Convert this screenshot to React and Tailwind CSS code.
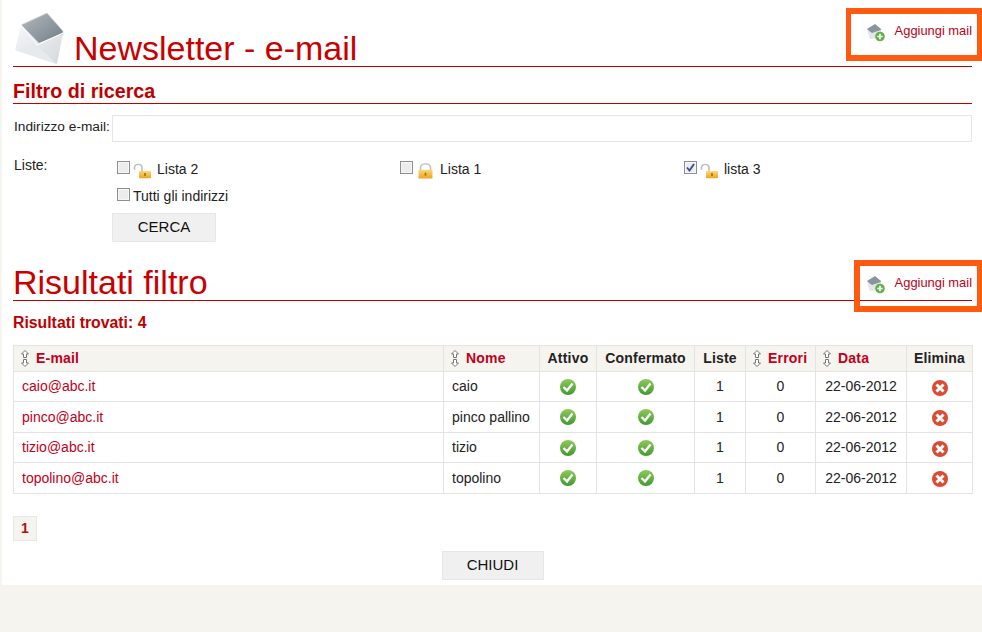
import React from "react";

const font = { fontFamily: '"Liberation Sans", Arial, sans-serif' };

function Envelope() {
  return (
    <svg width="54" height="54" viewBox="0 0 54 54" className="shrink-0">
      <defs>
        <linearGradient id="envIn" x1="0" y1="0" x2="1" y2="1">
          <stop offset="0" stopColor="#b4babe" />
          <stop offset="1" stopColor="#6f7d86" />
        </linearGradient>
        <linearGradient id="envB" x1="0" y1="0" x2="1" y2="1">
          <stop offset="0" stopColor="#f6f8f9" />
          <stop offset="1" stopColor="#d3d8db" />
        </linearGradient>
      </defs>
      <path d="M8 13 L34 1 L50 19 L50 23 L26 32 Z" fill="url(#envIn)" stroke="#d5d9db" strokeWidth="0.8" />
      <path d="M2 38 L8 13 L26 31 L50 21 L44 52 Z" fill="url(#envB)" />
      <path d="M2 38 L24 33 L44 52 Z" fill="#e6eaec" />
      <path d="M8 13 L24 33 M50 21 L24 33" stroke="#ffffff" strokeWidth="1" fill="none" />
    </svg>
  );
}

function AddMail() {
  return (
    <svg width="20" height="20" viewBox="0 0 20 20" className="shrink-0">
      <path d="M1 7 L9 2 L15 7 L14 11 L6 12 Z" fill="#8a959b" />
      <path d="M1 8 L6 11 L15 8 L14 16 L4 17 Z" fill="#e3e6e8" />
      <circle cx="14" cy="14.5" r="4.8" fill="#62ae4a" />
      <path d="M14 11.8 V17.2 M11.3 14.5 H16.7" stroke="#fff" strokeWidth="1.7" />
    </svg>
  );
}

function AddLink() {
  return (
    <a className="flex items-center gap-[9px] text-[12.9px] text-[#c00020]">
      <AddMail />
      <span className="relative top-[-1px]">Aggiungi mail</span>
    </a>
  );
}

function Lock({ open }) {
  return (
    <svg width="19" height="17" viewBox="0 0 19 20" preserveAspectRatio="none" className="shrink-0 block">
      <defs>
        <linearGradient id="lockG" x1="0" y1="0" x2="0" y2="1">
          <stop offset="0" stopColor="#fbd97a" />
          <stop offset="1" stopColor="#eea321" />
        </linearGradient>
      </defs>
      {open ? (
        <>
          <path d="M1.5 9 V6.5 C1.5 1.5 9 1.5 9 6.5 V11" fill="none" stroke="#b9bfc4" strokeWidth="1.6" />
          <rect x="6" y="10.5" width="12" height="8.5" rx="1" fill="url(#lockG)" />
          <rect x="11.2" y="13" width="1.6" height="3.5" fill="#a86a10" />
        </>
      ) : (
        <>
          <path d="M4.5 10 V6.5 C4.5 0.8 14.5 0.8 14.5 6.5 V10" fill="none" stroke="#b9bfc4" strokeWidth="1.6" />
          <rect x="2.5" y="9" width="14" height="10.5" rx="1" fill="url(#lockG)" />
          <rect x="8.7" y="12.5" width="1.6" height="3.5" fill="#a86a10" />
        </>
      )}
    </svg>
  );
}

function Check({ checked }) {
  return (
    <span className="relative block w-[13px] h-[13px] shrink-0 border border-[#8e8f8f] bg-[#ececec] shadow-[inset_0_0_0_1px_#f6f6f6]">
      {checked && (
        <svg width="11" height="11" viewBox="0 0 11 11" className="absolute left-0 top-0">
          <path d="M2 5.5 L4.5 8.5 L9 2" fill="none" stroke="#3b4a8c" strokeWidth="1.8" />
        </svg>
      )}
    </span>
  );
}

function SortIcon() {
  return (
    <svg width="10" height="17" viewBox="0 0 10 17" className="shrink-0">
      <path d="M5 0.5 L8.5 4 H6.5 V7.5 H3.5 V4 H1.5 Z" fill="#fff" stroke="#777" strokeWidth="1" />
      <path d="M5 16.5 L8.5 13 H6.5 V9.5 H3.5 V13 H1.5 Z" fill="#fff" stroke="#777" strokeWidth="1" />
    </svg>
  );
}

function Ok() {
  return (
    <svg width="16" height="16" viewBox="0 0 16 16" className="block mx-auto">
      <defs>
        <linearGradient id="okG" x1="0" y1="0" x2="0" y2="1">
          <stop offset="0" stopColor="#8fc95a" />
          <stop offset="1" stopColor="#3f9a2e" />
        </linearGradient>
      </defs>
      <circle cx="8" cy="8" r="8" fill="url(#okG)" />
      <path d="M3.5 8 L7 11.5 L12.5 4.5" fill="none" stroke="#fff" strokeWidth="2.4" />
    </svg>
  );
}

function Ko() {
  return (
    <svg width="16" height="16" viewBox="0 0 16 16" className="block mx-auto relative top-[1px]">
      <circle cx="8" cy="8" r="8" fill="#dc4a33" />
      <path d="M4.5 4.5 L11.5 11.5 M11.5 4.5 L4.5 11.5" fill="none" stroke="#fff" strokeWidth="3" />
    </svg>
  );
}

const rows = [
  ["caio@abc.it", "caio", "h-[30px]"],
  ["pinco@abc.it", "pinco pallino", "h-[31px]"],
  ["tizio@abc.it", "tizio", "h-[30px]"],
  ["topolino@abc.it", "topolino", "h-[31px]"],
];

const th = "border border-[#e3e3e3] bg-[#f5f4ef] font-bold text-[14px] tracking-[0.2px] p-0 text-center";
const td = "border border-[#e3e3e3] p-0 text-[14px] text-[#222] text-center";

function SortHead({ children }) {
  return (
    <div className="flex items-center gap-[6px] pl-[6px] text-[#c00020]">
      <SortIcon />
      <span>{children}</span>
    </div>
  );
}

const Btn = ({ children, w }) => (
  <button className={`${w} h-[29px] bg-[#f0f0f0] border border-[#e6e6e6] text-[15px] text-[#111] block`}>{children}</button>
);

function ListItem({ checked, open, label, ml }) {
  return (
    <div className="flex items-start">
      <Check checked={checked} />
      <span className="ml-[3px] mt-[1px]"><Lock open={open} /></span>
      <span className={`${ml} leading-[16px]`}>{label}</span>
    </div>
  );
}

export default function App() {
  return (
    <div style={font} className="min-h-[632px] bg-[#f5f4ef] text-[#222]">
      <div className="relative h-[585px] bg-white ml-[2px] pl-[11px] pr-[10px]">
        {/* header */}
        <div className="relative flex items-end justify-between h-[67px] border-b border-[#c00000] pt-[12px]">
          <div className="flex items-end">
            <Envelope />
            <h1 className="text-[34px] leading-[36px] text-[#c80000] ml-[7px]">Newsletter - e-mail</h1>
          </div>
          <div className="self-start mt-[10px]"><AddLink /></div>
          <div className="absolute right-[-10px] top-[8px] w-[136px] h-[53px] border-x-[5px] border-y-[6px] border-[#ff5a0f]" />
        </div>

        <h2 className="h-[37px] pt-[13px] leading-[22px] text-[19.7px] font-bold text-[#c00000] border-b border-[#c00000]">Filtro di ricerca</h2>

        {/* form */}
        <div className="flex items-center mt-[11px] text-[14px]">
          <label className="w-[99px] shrink-0 pl-[1px] relative top-[-1px] whitespace-nowrap text-[13.7px]">Indirizzo e-mail:</label>
          <div className="h-[27px] grow border border-[#e6e6e6] bg-white" />
        </div>

        <div className="flex mt-[15px] text-[14px]">
          <div className="w-[99px] shrink-0 pl-[1px] leading-[16px]">Liste:</div>
          <div className="grow">
            <div className="grid grid-cols-[283px_284px_1fr] h-[31px] pl-[5px] pt-[4px]">
              <ListItem open label="Lista 2" ml="ml-[5px]" />
              <ListItem label="Lista 1" ml="ml-[5px]" />
              <ListItem checked open label="lista 3" ml="ml-[5px]" />
            </div>
            <div className="flex items-start pl-[5px] h-[25px]">
              <Check /><span className="ml-[3px] leading-[16px]">Tutti gli indirizzi</span>
            </div>
            <Btn w="w-[104px]">CERCA</Btn>
          </div>
        </div>

        {/* results */}
        <div className="relative flex items-end justify-between h-[59px] border-b border-[#c00000]">
          <h1 className="text-[34px] leading-[36px] text-[#c80000]">Risultati filtro</h1>
          <div className="self-end mb-[6px]"><AddLink /></div>
          <div className="absolute right-[-10px] top-[18px] w-[128px] h-[52px] border-[6px] border-r-[5px] border-[#ff5a0f]" />
        </div>

        <div className="text-[15.8px] font-bold text-[#c00000] leading-[18px] mt-[13px]">Risultati trovati: 4</div>

        <table className="mt-[13px] w-[960px] table-fixed border-collapse">
          <colgroup>
            <col className="w-[430px]" />
            <col className="w-[96px]" />
            <col className="w-[57px]" />
            <col className="w-[98px]" />
            <col className="w-[51px]" />
            <col className="w-[70px]" />
            <col className="w-[91px]" />
            <col className="w-[66px]" />
          </colgroup>
          <thead>
            <tr className="h-[26px]">
              <th className={th}><SortHead>E-mail</SortHead></th>
              <th className={th}><SortHead>Nome</SortHead></th>
              <th className={th}>Attivo</th>
              <th className={th}>Confermato</th>
              <th className={th}>Liste</th>
              <th className={th}><SortHead>Errori</SortHead></th>
              <th className={th}><SortHead>Data</SortHead></th>
              <th className={th}>Elimina</th>
            </tr>
          </thead>
          <tbody>
            {rows.map(([mail, name, h]) => (
              <tr key={mail} className={h}>
                <td className={`${td} !text-left pl-[8px] !text-[#c00020]`}>{mail}</td>
                <td className={`${td} !text-left pl-[8px]`}>{name}</td>
                <td className={td}><Ok /></td>
                <td className={td}><Ok /></td>
                <td className={td}>1</td>
                <td className={td}>0</td>
                <td className={td}>22-06-2012</td>
                <td className={td}><Ko /></td>
              </tr>
            ))}
          </tbody>
        </table>

        <div className="mt-[22px] w-[24px] h-[25px] bg-[#f5f4ef] border border-[#e8e8e8] flex items-center justify-center text-[14px] font-bold text-[#b01020]">1</div>

        <div className="flex justify-center mt-[10px]"><Btn w="w-[102px]">CHIUDI</Btn></div>
      </div>
    </div>
  );
}
